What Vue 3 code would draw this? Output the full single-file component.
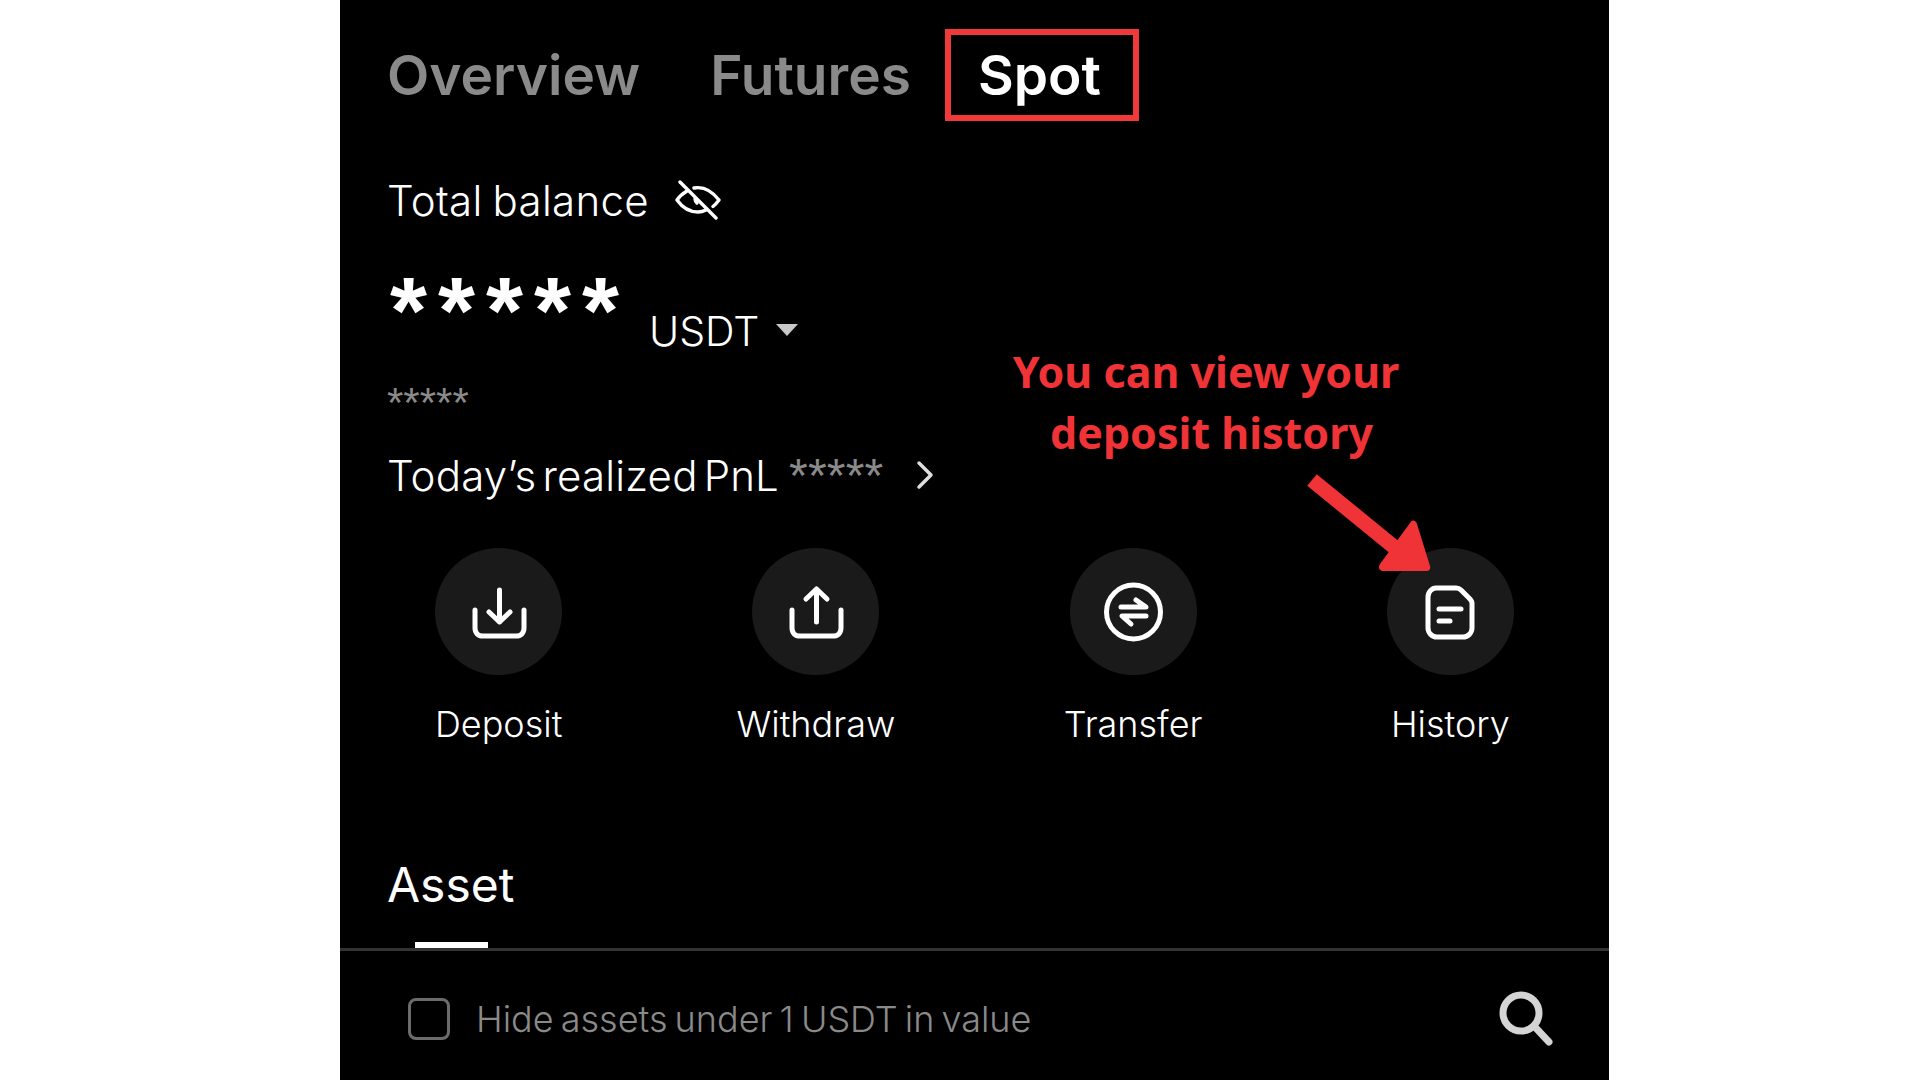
<script setup>
const tabs = [
  { name: 'Overview' },
  { name: 'Futures' },
  { name: 'Spot', active: true },
]
const actions = ['Deposit', 'Withdraw', 'Transfer', 'History']
</script>

<template>
  <div class="page">
    <div class="panel">
      <div class="tabs">
        <span v-for="tab in tabs" :key="tab.name" class="tab" :class="{ active: tab.active }">{{ tab.name }}</span>
      </div>

      <div class="balance-title">
        <span>Total balance</span>
        <svg class="eye" width="46" height="40" viewBox="0 0 46 40" fill="none" stroke="#fff" stroke-width="3.4" stroke-linecap="round" stroke-linejoin="round">
          <path d="M5 2l36 36" />
          <path d="M12 11C7 14 4 17 2 20c5 7 12 12 21 12 3 0 6-1 8-2" />
          <path d="M19 8c1-.3 3-.4 4-.4 9 0 16 6 21 12.400-1.500 2-3.500 4.500-6 6.500" />
          <path d="M20 19c0 2 1 3 2 4" />
        </svg>
      </div>

      <div class="amount">
        <span class="stars">*****</span>
        <span class="currency">USDT</span>
        <span class="caret"></span>
      </div>

      <div class="small-stars">*****</div>

      <div class="pnl">
        <span>Today’s realized PnL</span>
        <span class="pnl-stars">*****</span>
        <svg width="20" height="30" viewBox="0 0 20 30" fill="none" stroke="#ddd" stroke-width="3.500" stroke-linecap="round" stroke-linejoin="round">
          <path d="M4 3l12 12L4 27" />
        </svg>
      </div>

      <div class="actions">
        <div v-for="(label, i) in actions" :key="label" class="action">
          <div class="circle">
            <svg width="64" height="64" viewBox="0 0 64 64" fill="none" stroke="#fff" stroke-width="5" stroke-linecap="round" stroke-linejoin="round">
              <template v-if="i === 0">
                <path d="M8 30v18c0 5 3 8 8 8h33c5 0 8-3 8-8V30" />
                <path d="M32.500 10v32M22 32l10.500 10L43 32" />
              </template>
              <template v-else-if="i === 1">
                <path d="M8 30v18c0 5 3 8 8 8h33c5 0 8-3 8-8V30" />
                <path d="M32.500 42V9M22 19L32.500 9 43 19" />
              </template>
              <template v-else-if="i === 2">
                <circle cx="32.500" cy="32" r="27" />
                <path d="M20 27h25l-10-7M45 36H21l9 8" />
              </template>
              <template v-else>
                <path d="M18 8h20c2 0 4 1 5 2l8 8c2 2 3 3 3 5v25c0 5-4 9-9 9H19c-5 0-9-4-9-9V17c0-5 4-9 8-9z" />
                <path d="M21 29h22M21 41h11" />
              </template>
            </svg>
          </div>
          <span class="action-label">{{ label }}</span>
        </div>
      </div>

      <div class="asset-tabs">
        <span class="asset-tab">Asset</span>
      </div>

      <div class="filter">
        <span class="checkbox"></span>
        <span class="filter-text">Hide assets under 1 USDT in value</span>
        <svg class="search" width="56" height="56" viewBox="0 0 56 56" fill="none" stroke="#d4d4d4" stroke-linecap="round">
          <circle cx="23" cy="22" r="18" stroke-width="7" />
          <path d="M36 35l15 16" stroke-width="7" />
        </svg>
      </div>

      <div class="note">
        <span>You can view your</span>
        <span class="note-second">deposit history</span>
      </div>
      <svg class="arrow" width="140" height="110" viewBox="0 0 140 110">
        <path d="M5 6l98 80" stroke="#f03336" stroke-width="15" />
        <path d="M103 49c2-4 6-3 7 1l13 42c1 3-1 5-4 5H76c-4 0-5-4-3-7z" fill="#f03336" />
      </svg>
    </div>
  </div>
</template>

<style scoped>
.page {
  width: 1920px;
  height: 1080px;
  background: #fff;
  padding-left: 340px;
  box-sizing: border-box;
  overflow: hidden;
  font-family: Inter, "Liberation Sans", sans-serif;
}

.panel {
  position: relative;
  width: 1269px;
  height: 1080px;
  box-sizing: border-box;
  padding-top: 29px;
  background: #000;
  color: #fff;
}

.tabs {
  display: flex;
  align-items: center;
  height: 92px;
  padding-left: 47px;
}

.tab {
  font-size: 55px;
  font-weight: 600;
  color: #8a8a8a;
  margin-right: 70px;
}

.tab.active {
  color: #fff;
  margin-left: -36px;
  padding: 0 32px 0 27px;
  line-height: 80px;
  border: 6px solid #f03a3a;
}

.balance-title {
  display: flex;
  align-items: center;
  gap: 26px;
  padding: 55px 0 0 47px;
  font-size: 42px;
  font-weight: 300;
  letter-spacing: 0.3px;
  word-spacing: -2px;
  height: 48px;
}

.amount {
  display: flex;
  align-items: flex-end;
  padding-left: 47px;
  height: 132px;
}

.stars {
  font-family: "Liberation Sans", sans-serif;
  font-size: 95px;
  font-weight: 700;
  letter-spacing: 11px;
  line-height: 60px;
  width: 259px;
  margin: 0 0 16px 3px;
  height: 60px;
  white-space: nowrap;
}

.currency {
  font-size: 41px;
  font-weight: 300;
  line-height: 50px;
}

.caret {
  width: 0;
  height: 0;
  margin: 0 0 20px 17px;
  border-left: 11px solid transparent;
  border-right: 11px solid transparent;
  border-top: 12px solid #c8c8c8;
}

.small-stars {
  padding: 27px 0 0 47px;
  font-family: "Liberation Sans", sans-serif;
  font-size: 42px;
  color: #8a8a8a;
  height: 40px;
  line-height: 40px;
}

.pnl {
  display: flex;
  align-items: center;
  gap: 10px;
  padding: 27px 0 0 47px;
  height: 50px;
  font-size: 42px;
  font-weight: 300;
  letter-spacing: 0.2px;
  word-spacing: -6px;
}

.pnl-stars {
  font-family: "Liberation Sans", sans-serif;
  color: #8a8a8a;
  margin-right: 22px;
  font-size: 48px;
  font-weight: 400;
}

.actions {
  display: grid;
  grid-template-columns: repeat(4, 1fr);
  margin-top: 48px;
}

.action {
  display: flex;
  flex-direction: column;
  align-items: center;
}

.circle {
  width: 127px;
  height: 127px;
  border-radius: 50%;
  background: #1a1a1a;
  display: flex;
  align-items: center;
  justify-content: center;
}

.action-label {
  margin-top: 27px;
  font-size: 36px;
  font-weight: 300;
  line-height: 44px;
}

.asset-tabs {
  margin-top: 109px;
  height: 93px;
  padding-left: 47px;
  border-bottom: 3px solid #333;
}

.asset-tab {
  display: inline-block;
  position: relative;
  font-size: 48px;
  line-height: 60px;
  font-weight: 400;
}

.asset-tab::after {
  content: '';
  position: absolute;
  left: 28px;
  right: 26px;
  top: 87px;
  height: 6px;
  background: #fff;
}

.filter {
  display: flex;
  align-items: center;
  padding: 40px 0 0 68px;
}

.checkbox {
  width: 36px;
  height: 36px;
  border: 3px solid #6c6c6c;
  border-radius: 8px;
  margin-right: 26px;
}

.filter-text {
  font-size: 36px;
  font-weight: 300;
  word-spacing: -3px;
  color: #8a8a8a;
}

.search {
  margin-left: auto;
  margin-right: 55px;
}

.note {
  position: absolute;
  left: 656px;
  top: 341px;
  width: 420px;
  text-align: center;
  font-family: "Noto Sans", sans-serif;
  font-weight: 700;
  font-size: 43px;
  line-height: 61px;
  color: #f03336;
}

.note span {
  display: block;
}

.note .note-second {
  padding-left: 11px;
}

.arrow {
  position: absolute;
  left: 967px;
  top: 474px;
}
</style>

<style>
html, body {
  margin: 0;
  background: #fff;
}
</style>
